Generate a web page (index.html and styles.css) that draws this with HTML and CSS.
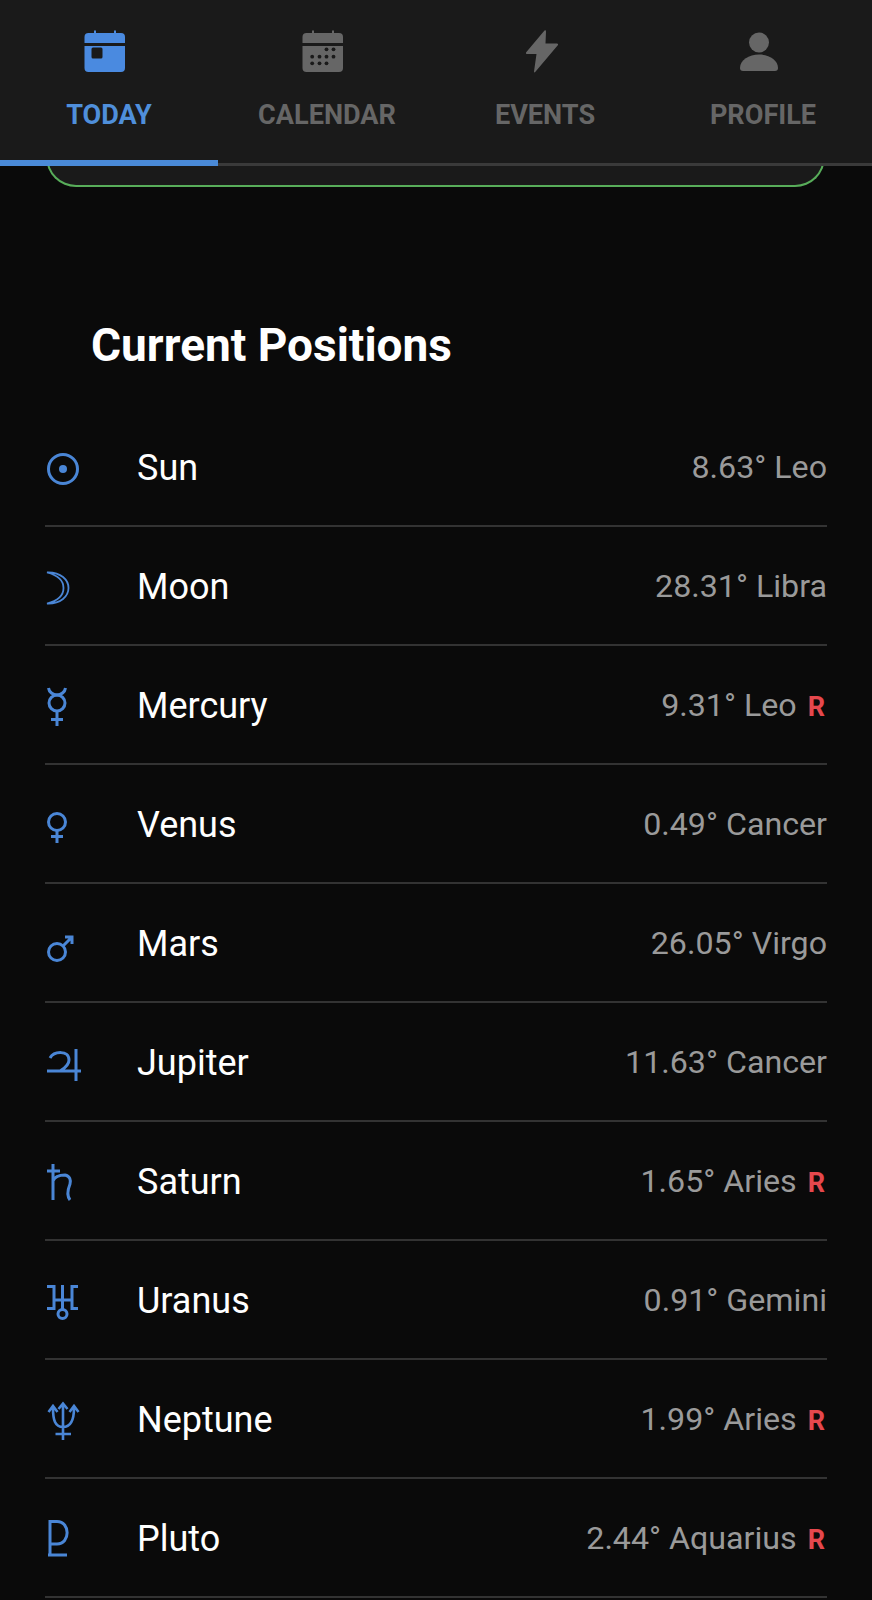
FILE: index.html
```html
<!DOCTYPE html>
<html lang="en">
<head>
<meta charset="utf-8">
<title>Current Positions</title>
<link rel="stylesheet" href="styles.css">
</head>
<body>
<div class="app">
  <header class="tabbar">
    <nav class="tabs">
      <div class="tab active">
        <svg class="tab-icon" viewBox="0 0 48 48"><path class="fill" fill-rule="evenodd" d="M3.500 18H44V40q0 4-4 4H7.500q-4 0-4-4zM12 19.500q-1.500 0-1.500 1.500v8q0 1.500 1.500 1.500h8q1.500 0 1.500-1.500v-8q0-1.500-1.500-1.500z"/><path class="fill" d="M7.500 5H40q4 0 4 4v6H3.500V9q0-4 4-4z"/><rect class="fill" x="13" y="2.500" width="2" height="4"/><rect class="fill" x="33" y="2.500" width="2" height="4"/></svg>
        <span class="tab-label">TODAY</span>
      </div>
      <div class="tab">
        <svg class="tab-icon" viewBox="0 0 48 48"><path class="fill" d="M7.500 5H40q4 0 4 4v6H3.500V9q0-4 4-4z"/><rect class="fill" x="13" y="2.500" width="2" height="4"/><rect class="fill" x="33" y="2.500" width="2" height="4"/><path class="fill" d="M3.500 18H44V40q0 4-4 4H7.500q-4 0-4-4z"/><g class="dots"><circle cx="27.500" cy="21.300" r="1.900"/><circle cx="34.500" cy="21.300" r="1.900"/><circle cx="13.200" cy="28.700" r="1.900"/><circle cx="20.500" cy="28.700" r="1.900"/><circle cx="27.500" cy="28.700" r="1.900"/><circle cx="34.500" cy="28.700" r="1.900"/><circle cx="13.200" cy="35.300" r="1.900"/><circle cx="20.500" cy="35.300" r="1.900"/><circle cx="27.500" cy="35.300" r="1.900"/></g></svg>
        <span class="tab-label">CALENDAR</span>
      </div>
      <div class="tab">
        <svg class="tab-icon" viewBox="0 0 48 48"><path class="fill" d="M27.500 2.500 9 24.500q-.5 1.500 1 1.500h9.500L17 43.500q0 1.500 1.200.5L41 17q.5-1.500-1-1.500H28.500L29 3.500q0-2-1.500-1z"/></svg>
        <span class="tab-label">EVENTS</span>
      </div>
      <div class="tab">
        <svg class="tab-icon" viewBox="0 0 48 48"><circle class="fill" cx="24" cy="14.500" r="10"/><path class="fill" d="M5 40C5 32 14 26.500 24 26.500S43 32 43 40q0 3-3 3H8q-3 0-3-3z"/></svg>
        <span class="tab-label">PROFILE</span>
      </div>
    </nav>
    <div class="tab-line"><div class="tab-line-active"></div></div>
  </header>

  <main class="content">
    <div class="card"></div>
    <h1 class="title">Current Positions</h1>
    <ul class="list">
      <li class="row">
        <svg class="glyph" viewBox="0 0 44 48"><circle cx="18" cy="26" r="14.500"/><circle class="solid" cx="18" cy="26" r="4"/></svg>
        <span class="name">Sun</span><span class="value">8.63° Leo</span>
      </li>
      <li class="row">
        <svg class="glyph thin" viewBox="0 0 44 48"><path d="M2 10.500C16 10 23.500 18 23.500 26S16 42 2 41.500C12 39 18.500 34 18.500 26S12 13 2 10.500z"/></svg>
        <span class="name">Moon</span><span class="value">28.31° Libra</span>
      </li>
      <li class="row">
        <svg class="glyph" viewBox="0 0 44 48"><circle cx="12" cy="22" r="8"/><path d="M3.500 7C4 11 8 14 12 14S20 11 20.500 7M12 30V45M6 38.500H18"/></svg>
        <span class="name">Mercury</span><span class="value">9.31° Leo<b class="retro">R</b></span>
      </li>
      <li class="row">
        <svg class="glyph" viewBox="0 0 44 48"><circle cx="12" cy="22" r="8.500"/><path d="M12 30.500V43M6 36.500H18"/></svg>
        <span class="name">Venus</span><span class="value">0.49° Cancer</span>
      </li>
      <li class="row">
        <svg class="glyph" viewBox="0 0 44 48"><circle cx="12" cy="33" r="8.500"/><path d="M18 27 27 18M20 18H27V25"/></svg>
        <span class="name">Mars</span><span class="value">26.05° Virgo</span>
      </li>
      <li class="row">
        <svg class="glyph" viewBox="0 0 44 48"><path d="M31 11V43M2 33H36M5 20C9 13 24 12 24 22C24 28 18 31 15 33"/></svg>
        <span class="name">Jupiter</span><span class="value">11.63° Cancer</span>
      </li>
      <li class="row">
        <svg class="glyph" viewBox="0 0 44 48"><path d="M8 7V43M2 14H15M8 24C10 19 16 18 20 18C25 19 26 23 25 27C23 32 21 38 25 43"/></svg>
        <span class="name">Saturn</span><span class="value">1.65° Aries<b class="retro">R</b></span>
      </li>
      <li class="row">
        <svg class="glyph" viewBox="0 0 44 48"><circle cx="17.500" cy="38" r="4.500"/><path d="M17.500 9V33.500M9 24H27M2 10.500H9V32.500H2M33 10.500H27V32.500H33"/></svg>
        <span class="name">Uranus</span><span class="value">0.91° Gemini</span>
      </li>
      <li class="row">
        <svg class="glyph slim" viewBox="0 0 44 48"><path d="M18 9V45M10.500 39H26M8 13C8 25 10 32 18 32S29 25 29 13M13.500 14 18 8.500 22.500 14M3.500 17 8 11 12.500 17M24.500 17 29 11 33.500 17"/></svg>
        <span class="name">Neptune</span><span class="value">1.99° Aries<b class="retro">R</b></span>
      </li>
      <li class="row">
        <svg class="glyph" viewBox="0 0 44 48"><path d="M5 6V41M3 41H22M5 7.500H12C25.500 7.500 25.500 30 12 30H5"/></svg>
        <span class="name">Pluto</span><span class="value">2.44° Aquarius<b class="retro">R</b></span>
      </li>
    </ul>
  </main>
</div>
</body>
</html>
```

FILE: styles.css
```css
* { box-sizing: border-box; }
html, body { margin: 0; padding: 0; background: #0a0a0a; }
body { font-family: Roboto, "Liberation Sans", sans-serif; }
.app { width: 872px; height: 1600px; overflow: hidden; display: flex; flex-direction: column; }

.tabbar { position: relative; z-index: 1; background: #1a1a1a; }
.tabs { display: flex; height: 163px; }
.tab { flex: 1; display: flex; flex-direction: column; align-items: center; padding-top: 28px; }
.tab-icon { width: 48px; height: 48px; margin-right: 9px; display: block; }
.tab-icon .fill { fill: #666; }
.tab.active .tab-icon .fill { fill: #4a8ae0; }
.dots { fill: #1a1a1a; }
.tab-label { margin-top: 23px; padding-top: 1px; font-size: 27.1px; line-height: 31px; font-weight: 700; color: #666; }
.tab.active .tab-label { color: #4f8fdb; }

.tab-line { height: 3px; background: #3a3a3a; position: relative; }
.tab-line-active { position: absolute; left: 0; bottom: 0; width: 218px; height: 6px; background: #4a8ad8; }

.content { flex: 1; }
.card { width: 779px; height: 50px; margin: -29px 0 0 46px; border: 2px solid #58ad5a; border-top: 0; border-radius: 0 0 30px 30px; background: #1a1a1a; }
.title { margin: 0; padding: 133px 0 0 91px; font-size: 46px; line-height: 50px; font-weight: 700; color: #fff; height: 221px; }

.list { list-style: none; margin: 0 0 0 45px; padding: 0; width: 782px; }
.row { height: 119px; display: grid; grid-template-columns: 92px 1fr auto; align-items: center; border-bottom: 2px solid #333; }
.glyph { width: 44px; height: 48px; display: block; fill: none; stroke: #4a86d6; stroke-width: 3; }
.glyph.thin { stroke-width: 1.8; }
.glyph.slim { stroke-width: 2.6; }
.glyph .solid { fill: #4a86d6; stroke: none; }
.name { padding-top: 2px; font-size: 36px; color: #fff; }
.value { font-size: 32.2px; color: #9a9a9a; }
.retro { margin: 0 2px 0 11px; font-size: 27px; font-weight: 700; color: #e5484d; }
```
